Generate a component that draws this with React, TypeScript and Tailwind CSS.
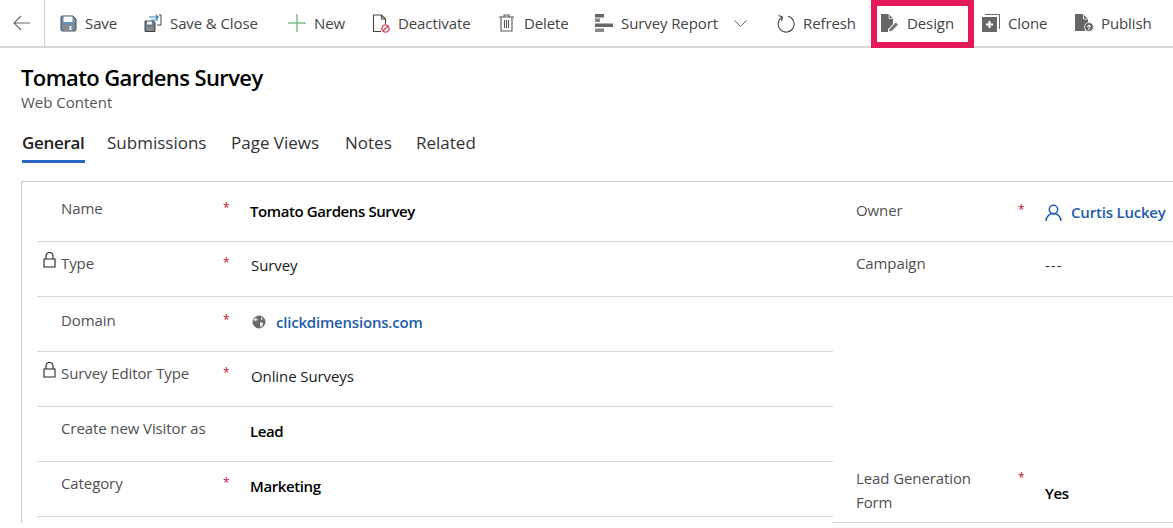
import type { ReactNode } from "react";

const FONT = "font-['Open_Sans','Noto_Sans',sans-serif]";

const SaveIcon = () => (
  <svg width="17" height="17" viewBox="0 0 17 17">
    <path d="M1 2.5A1.5 1.5 0 0 1 2.5 1H13l3 3v10.5a1.5 1.5 0 0 1-1.5 1.5h-12A1.5 1.5 0 0 1 1 14.5z" fill="#6f8fb0" stroke="#4a4a4a" strokeWidth="1" />
    <rect x="3.5" y="1.5" width="9" height="5.5" fill="#f4f6f8" />
    <rect x="4" y="10" width="9" height="6" fill="#8a8a8a" />
    <rect x="9.5" y="11" width="2" height="4" fill="#e8e8e8" />
  </svg>
);

const SaveCloseIcon = () => (
  <svg width="18" height="19" viewBox="0 0 18 19">
    <path d="M1 7h8.5L11 8.5V17.5H1z" fill="#6f7f8f" stroke="#444" strokeWidth="1" />
    <rect x="3" y="7.5" width="5" height="3" fill="#eee" />
    <rect x="3" y="13" width="6" height="4" fill="#8a8a8a" />
    <path d="M5 3h9M12 1l2 2-2 2M14 6H7" fill="none" stroke="#2a7ab8" strokeWidth="1.2" />
    <path d="M15 1h2v10h-4" fill="none" stroke="#444" strokeWidth="1" />
  </svg>
);

const PlusIcon = () => (
  <svg width="18" height="18" viewBox="0 0 18 18">
    <path d="M9 0v18M0 9h18" stroke="#7cc08f" strokeWidth="1.5" />
  </svg>
);

const DeactivateIcon = () => (
  <svg width="18" height="19" viewBox="0 0 18 19">
    <path d="M9 17.5H1.5V1h8l4 4v5M9.5 1v4h4" fill="none" stroke="#444" strokeWidth="1.1" />
    <circle cx="13.5" cy="14.5" r="3.6" fill="#fff" stroke="#d9455a" strokeWidth="1.4" />
    <path d="M11 17l5-5" stroke="#d9455a" strokeWidth="1.4" />
  </svg>
);

const TrashIcon = () => (
  <svg width="15" height="18" viewBox="0 0 15 18">
    <path d="M0 3h15M5 3V1h5v2M2 3v14h11V3M5.5 6v8M7.5 6v8M9.5 6v8" fill="none" stroke="#555" strokeWidth="1.1" />
  </svg>
);

const ReportIcon = () => (
  <svg width="18" height="18" viewBox="0 0 18 18">
    <rect x="0" y="0" width="9" height="3.5" fill="#666" />
    <rect x="0" y="4.5" width="5" height="3.5" fill="#888" />
    <rect x="0" y="9.5" width="18" height="3.5" fill="#666" />
    <rect x="0" y="14.5" width="9" height="3.5" fill="#888" />
  </svg>
);

const RefreshIcon = () => (
  <svg width="18" height="19" viewBox="0 0 18 19">
    <path d="M5 3.2A8 8 0 1 0 11 2.3" fill="none" stroke="#444" strokeWidth="1.1" />
    <path d="M1.5 1.5L5.5 3l-1 4" fill="none" stroke="#444" strokeWidth="1.1" />
  </svg>
);

const DesignIcon = () => (
  <svg width="18" height="18" viewBox="0 0 18 18">
    <path d="M0 0h7.5l4.5 4.5V10l-5 5v3H0z" fill="#666" />
    <path d="M8 0.5V4.5H12" fill="none" stroke="#fff" strokeWidth="0.8" />
    <path d="M8 17.5l.8-3 6-6 2.2 2.2-6 6z" fill="#777" />
  </svg>
);

const CloneIcon = () => (
  <svg width="18" height="18" viewBox="0 0 18 18">
    <path d="M3 .5h14.5V15" fill="none" stroke="#666" strokeWidth="1" />
    <rect x="0" y="3" width="15" height="15" fill="#666" />
    <path d="M7.5 7v7M4 10.5h7" stroke="#fff" strokeWidth="2" />
  </svg>
);

const PublishIcon = () => (
  <svg width="19" height="18" viewBox="0 0 19 18">
    <path d="M0 0h8l5 5v5l-3 7H0z" fill="#666" />
    <path d="M8.5 0v5H13" fill="none" stroke="#fff" strokeWidth="0.8" />
    <circle cx="14" cy="13" r="4.5" fill="#666" stroke="#fff" strokeWidth="0.8" />
    <path d="M14 16v-5M12 13l2-2 2 2" fill="none" stroke="#fff" strokeWidth="1" />
  </svg>
);

const LockIcon = () => (
  <svg width="13" height="17" viewBox="0 0 13 17" className="mr-[5px] mt-[1px] shrink-0">
    <path d="M1 7h11v8H1zM3 7V4a3.5 3.5 0 0 1 7 0v3" fill="none" stroke="#222" strokeWidth="1.1" />
  </svg>
);

const GlobeIcon = () => (
  <svg width="14" height="14" viewBox="0 0 14 14">
    <circle cx="7" cy="7" r="6.5" fill="#6b6b6b" />
    <path d="M6 1L4 3l2 2-3 1-2-1M8 7l3 1 0 2-2 3-1-3zM9 2l2 2-2 1z" fill="#e6e6e6" />
  </svg>
);

const UserIcon = () => (
  <svg width="17" height="17" viewBox="0 0 17 17">
    <circle cx="8.5" cy="5.5" r="4.2" fill="none" stroke="#1f5cab" strokeWidth="1.5" />
    <path d="M1 17a7.5 7.5 0 0 1 15 0" fill="none" stroke="#1f5cab" strokeWidth="1.5" />
  </svg>
);

function Star() {
  return <span className="absolute top-[2px] left-0 text-[12px] leading-5 text-[#c8102e]">*</span>;
}

function ToolItem({ icon, label, className, iconClass = "w-[26px]" }: {
  icon: ReactNode; label: string; className: string; iconClass?: string;
}) {
  return (
    <div className={`flex h-full shrink-0 items-center ${className}`}>
      <span className={`flex shrink-0 items-center ${iconClass}`}>{icon}</span>
      <span className="whitespace-nowrap">{label}</span>
    </div>
  );
}

function Field({ label, lock, star, children, className }: {
  label: ReactNode; lock?: boolean; star?: boolean; children: ReactNode; className: string;
}) {
  return (
    <div className={`flex border-b border-[#d8d8d8] ${className}`}>
      <div className={`flex w-[186px] shrink-0 items-start text-[15px] tracking-[-0.1px] leading-[24px] text-[#505050] ${lock ? "pl-[6px]" : "pl-[24px]"}`}>
        {lock && <LockIcon />}
        {label}
      </div>
      <div className="relative w-[27px] shrink-0">{star && <Star />}</div>
      <div className="min-w-0 flex-1">{children}</div>
    </div>
  );
}

const VALUE = "text-[15px] tracking-[-0.4px] leading-[24px] font-semibold text-black";
const VALUE_LOCKED = "text-[15px] tracking-[-0.1px] leading-[24px] font-medium text-[#1a1a1a]";
const LINK = "text-[15px] tracking-[-0.2px] leading-[24px] font-semibold text-[#1f5cab]";

export default function App() {
  return (
    <div className={`h-[528px] w-[1173px] overflow-hidden bg-white ${FONT}`}>
      {/* Command bar */}
      <div className="relative flex h-[48px] items-center border-b-[2px] border-[#d8d8d8] text-[15px] tracking-[-0.1px] text-[#444]">
        <div className="flex h-full w-[45px] shrink-0 items-center justify-center border-r border-[#d0d0d0]">
          <svg width="18" height="16" viewBox="0 0 18 16">
            <path d="M17 8H1M8 1L1 8l7 7" fill="none" stroke="#666" strokeWidth="1.1" />
          </svg>
        </div>
        <div className="flex h-full items-center pl-[15px]">
          <ToolItem icon={<SaveIcon />} label="Save" className="w-[84px]" iconClass="w-[25px]" />
          <ToolItem icon={<SaveCloseIcon />} label="Save & Close" className="w-[144px]" />
          <ToolItem icon={<PlusIcon />} label="New" className="w-[84px]" />
          <ToolItem icon={<DeactivateIcon />} label="Deactivate" className="w-[127px]" />
          <ToolItem icon={<TrashIcon />} label="Delete" className="w-[96px]" iconClass="w-[25px]" />
          <div className="flex h-full w-[182px] shrink-0 items-center">
            <span className="flex w-[26px] shrink-0 items-center"><ReportIcon /></span>
            <span className="w-[113px] whitespace-nowrap">Survey Report</span>
            <svg width="13" height="7" viewBox="0 0 13 7">
              <path d="M.5.5l6 6 6-6" fill="none" stroke="#666" strokeWidth="1" />
            </svg>
          </div>
          <ToolItem icon={<RefreshIcon />} label="Refresh" className="w-[104px]" />
          <div className="relative h-full">
            <ToolItem icon={<DesignIcon />} label="Design" className="w-[101px]" />
            <div className="absolute top-0 left-[-10px] h-[48px] w-[103px] border-[6px] border-[#e31a58]" />
          </div>
          <ToolItem icon={<CloneIcon />} label="Clone" className="w-[93px]" />
          <ToolItem icon={<PublishIcon />} label="Publish" className="w-[80px]" />
        </div>
      </div>

      {/* Record header */}
      <div className="pl-[21px]">
        <h1 className="mt-[14px] text-[22px] leading-[30px] tracking-[-0.6px] font-semibold text-black">Tomato Gardens Survey</h1>
        <p className="text-[15px] leading-[20px] font-medium text-[#555]">Web Content</p>
        <div className="mt-[17px] flex h-[36px] pl-[1px] text-[17px] leading-[28px] text-[#333]">
          <span className="h-[28px] w-[63px] box-content border-b-[3px] border-[#2b65c4] pb-[3px] font-semibold tracking-[-0.3px] text-[#222]">General</span>
          <span className="ml-[22px] w-[124px]">Submissions</span>
          <span className="w-[114px]">Page Views</span>
          <span className="w-[71px]">Notes</span>
          <span>Related</span>
        </div>
      </div>

      {/* Form */}
      <div className="ml-[21px] mt-[16px] flex border-t border-l border-[#c8c8c8]">
        <div className="ml-[15px] w-[796px] shrink-0">
          <Field label="Name" star className="h-[60px] pt-[14px]">
            <div className={`${VALUE} pt-[3px]`}>Tomato Gardens Survey</div>
          </Field>
          <Field label="Type" lock star className="h-[55px] pt-[9px]">
            <div className={`${VALUE_LOCKED} pl-[1px] pt-[2px]`}>Survey</div>
          </Field>
          <Field label="Domain" star className="h-[55px] pt-[11px]">
            <div className="flex items-center gap-[10px] pl-[2px] pt-[2px]">
              <GlobeIcon />
              <span className={LINK}>clickdimensions.com</span>
            </div>
          </Field>
          <Field label="Survey Editor Type" lock star className="h-[55px] pt-[9px]">
            <div className={`${VALUE_LOCKED} pl-[1px] pt-[3px]`}>Online Surveys</div>
          </Field>
          <Field label="Create new Visitor as" className="h-[55px] pt-[9px]">
            <div className={`${VALUE} pt-[3px]`}>Lead</div>
          </Field>
          <Field label="Category" star className="h-[55px] pt-[9px]">
            <div className={`${VALUE} pt-[3px]`}>Marketing</div>
          </Field>
        </div>
        <div className="-ml-px min-w-0 flex-1">
          <Field label="Owner" star className="h-[60px] pt-[16px]">
            <div className="flex items-center gap-[9px] whitespace-nowrap pt-[2px]">
              <UserIcon />
              <span className={LINK}>Curtis Luckey</span>
            </div>
          </Field>
          <Field label="Campaign" className="h-[55px] pt-[9px]">
            <div className="pt-[2px] text-[15px] leading-[24px] tracking-[1px] text-[#333]">---</div>
          </Field>
          <div className="h-[164px]" />
          <Field label={<span>Lead Generation<br />Form</span>} star className="h-[62px] pt-[5px]">
            <div className={`${VALUE} pt-[15px]`}>Yes</div>
          </Field>
        </div>
      </div>
    </div>
  );
}
